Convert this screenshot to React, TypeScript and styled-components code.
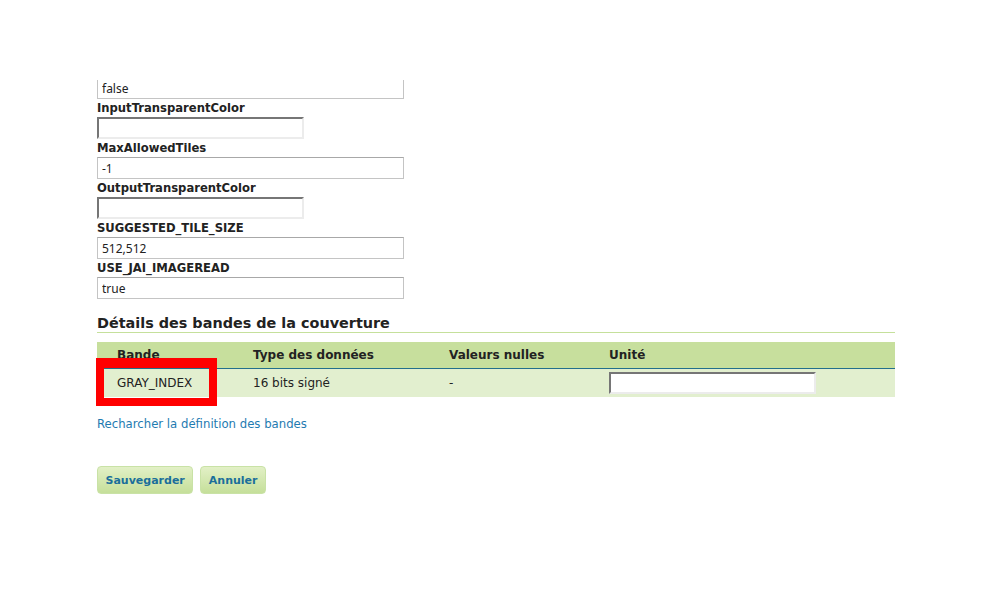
import React from "react";
import styled, { createGlobalStyle } from "styled-components";

const GlobalStyle = createGlobalStyle`
  html, body {
    margin: 0;
    padding: 0;
    background: #ffffff;
  }
  body {
    font-family: "DejaVu Sans", Verdana, sans-serif;
    font-size: 12px;
    color: #222;
  }
`;

interface Param {
  name: string;
  value?: string;
  kind: "text" | "color";
}

const params: Param[] = [
  { name: "InputTransparentColor", kind: "color" },
  { name: "MaxAllowedTiles", value: "-1", kind: "text" },
  { name: "OutputTransparentColor", kind: "color" },
  { name: "SUGGESTED_TILE_SIZE", value: "512,512", kind: "text" },
  { name: "USE_JAI_IMAGEREAD", value: "true", kind: "text" },
];

export default function App() {
  return (
    <>
      <GlobalStyle />
      <SPage>
        <SScroller>
          <SContent>
            <SField>
              <STextInput defaultValue="false" />
            </SField>
            {params.map((p) => (
              <SField key={p.name}>
                <SLabel>{p.name}</SLabel>
                {p.kind === "text" ? (
                  <STextInput defaultValue={p.value} />
                ) : (
                  <SColorInput />
                )}
              </SField>
            ))}

            <SHeading>Détails des bandes de la couverture</SHeading>
            <STable>
              <colgroup>
                <col style={{ width: 136 }} />
                <col style={{ width: 196 }} />
                <col style={{ width: 160 }} />
                <col />
              </colgroup>
              <thead>
                <tr>
                  <STh>Bande</STh>
                  <STh>Type des données</STh>
                  <STh>Valeurs nulles</STh>
                  <STh>Unité</STh>
                </tr>
              </thead>
              <tbody>
                <tr>
                  <STd>
                    GRAY_INDEX
                    <SHighlight />
                  </STd>
                  <STd>16 bits signé</STd>
                  <STd>-</STd>
                  <STd>
                    <SColorInput />
                  </STd>
                </tr>
              </tbody>
            </STable>

            <SLink href="#">Recharcher la définition des bandes</SLink>

            <SButtons>
              <SButton>Sauvegarder</SButton>
              <SButton>Annuler</SButton>
            </SButtons>
          </SContent>
        </SScroller>
      </SPage>
    </>
  );
}

const SPage = styled.div`
  width: 993px;
  height: 600px;
  padding-top: 80px;
  box-sizing: border-box;
  overflow: hidden;
`;

const SScroller = styled.div`
  height: 520px;
  overflow: hidden;
`;

const SContent = styled.div`
  margin-top: -3px;
  padding-left: 97px;
  width: 798px;
`;

const SField = styled.div`
  display: flex;
  flex-direction: column;
  align-items: flex-start;
`;

const SLabel = styled.label`
  font-weight: bold;
  font-size: 11.6px;
  line-height: 18px;
  height: 18px;
`;

const STextInput = styled.input`
  box-sizing: border-box;
  width: 307px;
  height: 22px;
  padding: 0 4px;
  border: 1px solid #c4c4c4;
  border-top-color: #a8a8a8;
  background: #fff;
  font-family: "Noto Sans", "DejaVu Sans", sans-serif;
  font-size: 12px;
  color: #222;
  outline: none;
`;

const SColorInput = styled.input`
  box-sizing: border-box;
  width: 207px;
  height: 22px;
  padding: 0 4px;
  border-style: solid;
  border-width: 2px;
  border-color: #767676 #ececec #ececec #767676;
  background: #fff;
  outline: none;
`;

const SHeading = styled.h3`
  margin: 16px 0 0;
  padding-bottom: 1px;
  font-size: 14.4px;
  line-height: 16px;
  font-weight: bold;
  color: #222;
  border-bottom: 1px solid #c5e09b;
`;

const STable = styled.table`
  margin-top: 9px;
  width: 798px;
  border-collapse: collapse;
  table-layout: fixed;
`;

const STh = styled.th`
  height: 26px;
  padding: 0 0 0 20px;
  text-align: left;
  font-weight: bold;
  font-size: 12px;
  background: #c7df9d;
  border-bottom: 1px solid #236f8c;
  color: #222;
`;

const STd = styled.td`
  position: relative;
  height: 28px;
  padding: 0 0 0 20px;
  background: #e2efcf;
  font-size: 12px;
  color: #222;
`;

const SHighlight = styled.span`
  position: absolute;
  left: -1px;
  top: -11px;
  width: 121px;
  height: 48px;
  box-sizing: border-box;
  border: 8px solid #ff0000;
  border-top-width: 10px;
`;

const SLink = styled.a`
  display: block;
  margin-top: 19px;
  font-size: 11.7px;
  line-height: 16px;
  color: #1f7bb1;
  text-decoration: none;
`;

const SButtons = styled.div`
  display: flex;
  gap: 7px;
  margin-top: 34px;
`;

const SButton = styled.button`
  height: 28px;
  padding: 0 7.5px;
  border: 1px solid #c9e2a6;
  border-radius: 4px;
  background: linear-gradient(#e2f0c6, #c5df9a);
  font-family: "DejaVu Sans", Verdana, sans-serif;
  font-size: 11px;
  font-weight: bold;
  color: #1b6f9b;
  cursor: pointer;
`;
